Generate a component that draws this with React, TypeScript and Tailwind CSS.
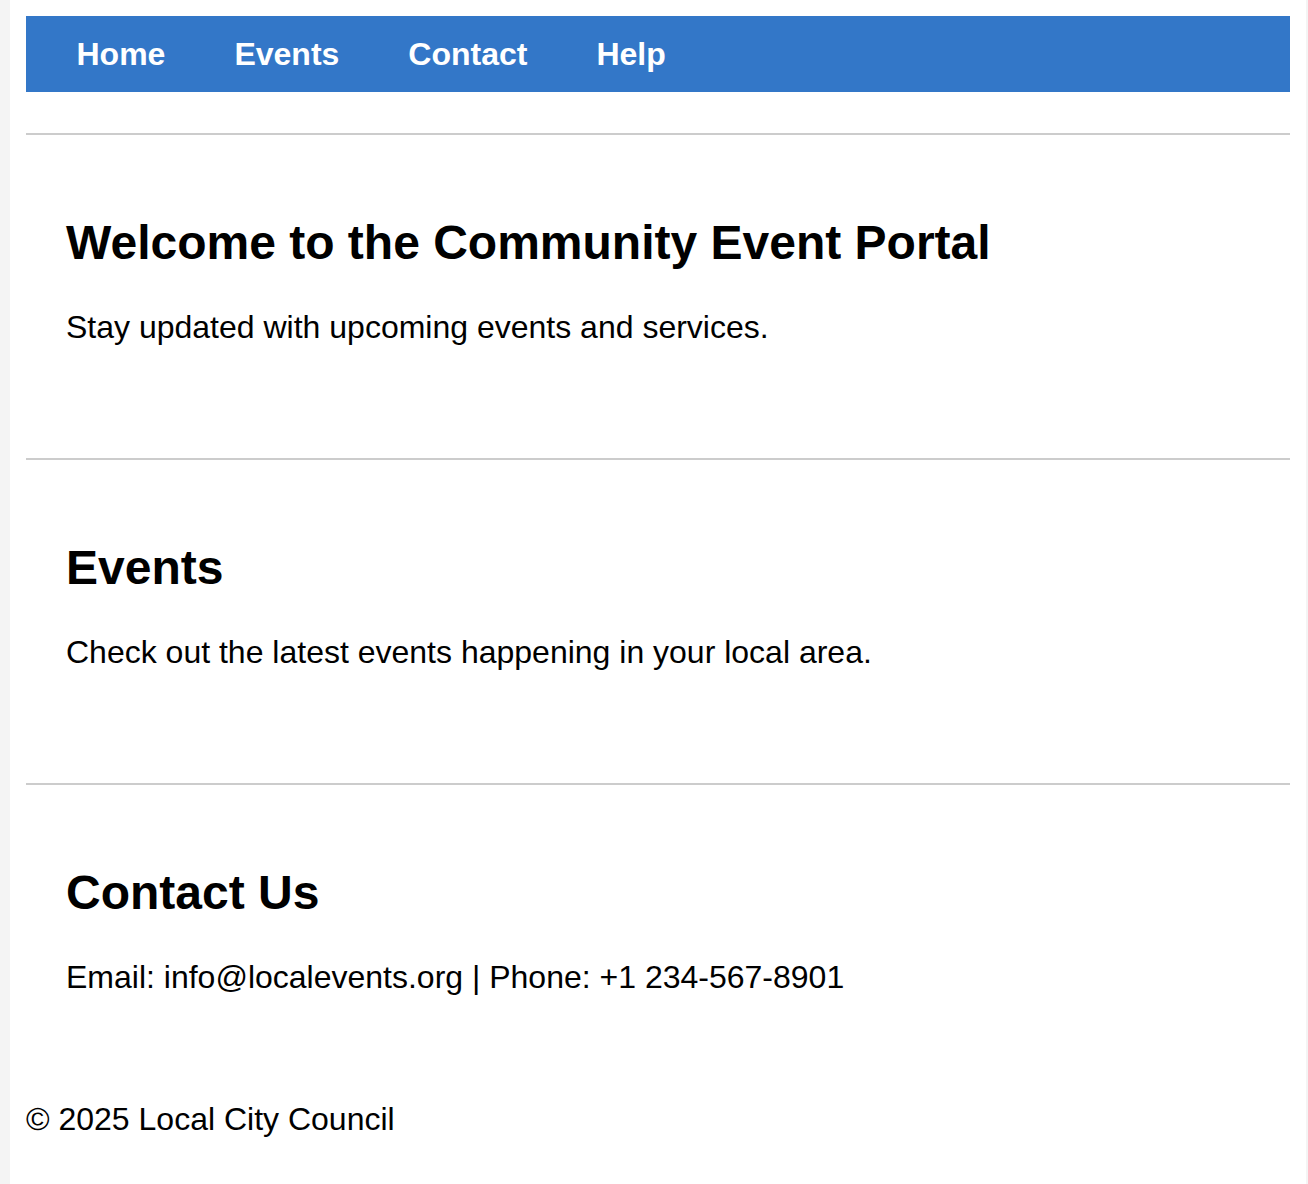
const links = ["Home", "Events", "Contact", "Help"];

const sections = [
  {
    title: "Welcome to the Community Event Portal",
    body: "Stay updated with upcoming events and services.",
  },
  {
    title: "Events",
    body: "Check out the latest events happening in your local area.",
  },
  {
    title: "Contact Us",
    body: "Email: info@localevents.org | Phone: +1 234-567-8901",
  },
];

export default function App() {
  return (
    <div className="min-h-screen bg-[#f4f4f4] pl-[10px] pr-[2px] font-['Liberation_Sans',Arial,sans-serif] text-black">
      <div className="min-h-[1184px] bg-white px-[16px] pt-[16px]">
        {/* top nav */}
        <nav className="flex h-[76px] items-center bg-[#3377c8] px-[16px]">
          {links.map((l) => (
            <a
              key={l}
              href="#"
              className="px-[34.5px] text-[32px] font-bold leading-[36px] text-white"
            >
              {l}
            </a>
          ))}
        </nav>

        <main className="mt-[41px]">
          {sections.map((s) => (
            <section
              key={s.title}
              className="mb-[40px] border-t-2 border-[#cccccc] px-[40px] pt-[40px] pb-[40px] last:mb-0"
            >
              <h2 className="mt-[40px] mb-[39px] text-[48px] font-bold leading-[55px]">
                {s.title}
              </h2>
              <p className="mb-[32px] text-[32px] leading-[37px]">{s.body}</p>
            </section>
          ))}
        </main>

        <footer className="mt-[33px]">
          <p className="text-[32px] leading-[37px]">© 2025 Local City Council</p>
        </footer>
      </div>
    </div>
  );
}
